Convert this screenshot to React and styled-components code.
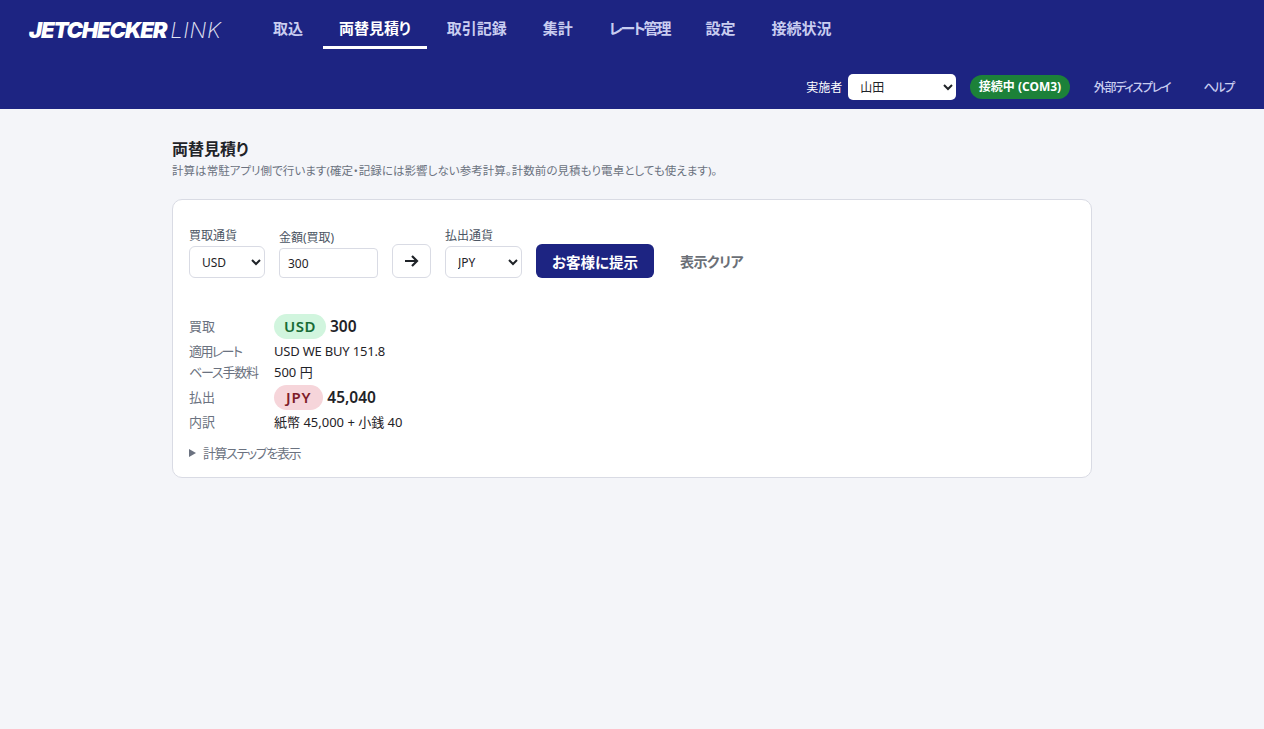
import React from 'react';
import styled, { createGlobalStyle } from 'styled-components';

const FONT = `"Noto Sans", "Noto Sans CJK JP", sans-serif`;

const GlobalStyle = createGlobalStyle`
    html, body {
        margin: 0;
        padding: 0;
        background: #f4f5f9;
    }
    body {
        font-family: ${FONT};
        font-feature-settings: "palt";
        color: #1f2328;
        min-height: 729px;
    }
    select, input, button {
        font-feature-settings: "palt";
    }
`;

const NAV_ITEMS = [
    { label: '取込' },
    { label: '両替見積り', active: true },
    { label: '取引記録' },
    { label: '集計' },
    { label: 'レート管理', track: -2.1 },
    { label: '設定' },
    { label: '接続状況' },
];

const Header = styled.header`
    background: #1d2482;
    height: 109px;
    display: flex;
    flex-direction: column;
    justify-content: space-between;
    padding: 0 30px 9px 29px;
    box-sizing: border-box;
`;

const TopRow = styled.div`
    display: flex;
    align-items: flex-start;
`;

const Logo = styled.div`
    width: 228px;
    height: 49px;
    padding-top: 10px;
    box-sizing: border-box;
    display: flex;
    align-items: center;
    gap: 4px;
    font-family: "Inter", sans-serif;
    font-style: italic;
    font-size: 22px;
    line-height: 1;
    color: #fff;
`;

const LogoBold = styled.span`
    font-weight: 900;
    letter-spacing: -1.2px;
`;

const LogoThin = styled.span`
    font-weight: 200;
    letter-spacing: 0.6px;
    color: #e4e6f4;
`;

const Nav = styled.nav`
    display: flex;
    gap: 4px;
`;

const Tab = styled.a`
    height: 49px;
    box-sizing: border-box;
    padding: 8px 16px 0;
    display: flex;
    align-items: center;
    font-size: 15px;
    font-weight: 700;
    letter-spacing: ${(p) => p.$track || 0}px;
    color: ${(p) => (p.$active ? '#fff' : '#c9cdf0')};
    border-bottom: 3px solid ${(p) => (p.$active ? '#fff' : 'transparent')};
`;

const ToolRow = styled.div`
    display: flex;
    justify-content: flex-end;
    align-items: center;
    height: 26px;
`;

const OperatorLabel = styled.label`
    display: flex;
    align-items: center;
    gap: 6px;
    color: #fff;
    font-size: 12px;
    margin-right: 14px;
`;

const OperatorSelect = styled.select`
    width: 108px;
    height: 26px;
    border: 0;
    border-radius: 5px;
    background: #fff;
    color: #1f2328;
    font-family: ${FONT};
    font-size: 12px;
    padding: 0 8px;
`;

const Status = styled.span`
    background: #1c8139;
    color: #fff;
    font-size: 12px;
    font-weight: 700;
    height: 24px;
    line-height: 24px;
    padding: 0 8.5px;
    border-radius: 12px;
    margin-right: 24px;
`;

const HeadLink = styled.a`
    color: #c9cdf0;
    font-size: 12px;
    font-weight: 500;
    letter-spacing: -1.25px;
    margin-left: ${(p) => (p.$gap ? '33px' : '0')};
`;

const Main = styled.main`
    width: 920px;
    margin: 0 auto;
    padding-top: 28px;
`;

const Title = styled.h1`
    margin: 0;
    font-size: 16px;
    line-height: 24px;
    font-weight: 700;
    color: #1f2328;
`;

const Sub = styled.p`
    margin: 2px 0 20px;
    font-size: 11.5px;
    letter-spacing: 0.05px;
    line-height: 16px;
    color: #6b7280;
`;

const Card = styled.section`
    box-sizing: border-box;
    height: 279px;
    background: #fff;
    border: 1px solid #d9dbe4;
    border-radius: 10px;
    padding: 26px 16px 0;
`;

const FormRow = styled.div`
    display: flex;
    align-items: flex-end;
    gap: 14px;
    height: 52px;
`;

const Field = styled.label`
    display: flex;
    flex-direction: column;
    gap: 2px;
    font-size: 12px;
    line-height: 16px;
    color: #4b5563;
`;

const Select = styled.select`
    width: ${(p) => p.$w || 76}px;
    height: 32px;
    box-sizing: border-box;
    border: 1px solid #d9dbe4;
    border-radius: 6px;
    background: #fff;
    color: #1f2328;
    font-family: ${FONT};
    font-size: 12px;
    padding: 0 8px;
`;

const Input = styled.input`
    width: 99px;
    height: 30px;
    box-sizing: border-box;
    border: 1px solid #d9dbe4;
    border-radius: 4px;
    background: #fff;
    color: #1f2328;
    font-family: ${FONT};
    font-size: 12px;
    padding: 0 8px;
`;

const ArrowButton = styled.button`
    width: 39px;
    height: 34px;
    box-sizing: border-box;
    border: 1px solid #d9dbe4;
    border-radius: 6px;
    background: #fff;
    color: #1f2328;
    display: flex;
    align-items: center;
    justify-content: center;
    padding: 0;
`;

const PrimaryButton = styled.button`
    height: 34px;
    width: 118px;
    border: 0;
    border-radius: 6px;
    background: #1d2482;
    color: #fff;
    font-family: ${FONT};
    font-size: 14.5px;
    font-weight: 700;
    padding: 0;
`;

const GhostButton = styled.button`
    height: 34px;
    border: 0;
    background: transparent;
    color: #6b6f76;
    font-family: ${FONT};
    font-size: 14px;
    font-weight: 700;
    letter-spacing: -0.5px;
    padding: 0 12px;
`;

const Rows = styled.div`
    margin-top: 36px;
    display: grid;
    grid-template-columns: 85px 1fr;
    row-gap: 4px;
    align-items: center;
`;

const RowLabel = styled.div`
    font-size: 13px;
    line-height: 17px;
    letter-spacing: ${(p) => p.$track || 0}px;
    color: #6b7280;
`;

const RowValue = styled.div`
    display: flex;
    align-items: center;
    gap: 4px;
    font-size: 13px;
    line-height: 17px;
    letter-spacing: ${(p) => p.$track || 0}px;
    color: #1f2328;
`;

const Pill = styled.span`
    height: 25px;
    line-height: 25px;
    padding: 0 ${(p) => (p.$tone === 'green' ? 10 : 12)}px;
    border-radius: 13px;
    font-size: 15px;
    font-weight: 600;
    letter-spacing: ${(p) => (p.$tone === 'green' ? 0.5 : 0.8)}px;
    background: ${(p) => (p.$tone === 'green' ? '#d1f5de' : '#f6d5da')};
    color: ${(p) => (p.$tone === 'green' ? '#176b35' : '#7f1d2a')};
`;

const Amount = styled.strong`
    font-size: 15.5px;
    font-weight: 600;
`;

const Steps = styled.div`
    margin-top: 13px;
    display: flex;
    align-items: center;
    gap: 7px;
    font-size: 13px;
    line-height: 18px;
    letter-spacing: -1.4px;
    color: #6b7280;
`;

const Caret = styled.span`
    width: 0;
    height: 0;
    border-left: 7px solid #6b7280;
    border-top: 4px solid transparent;
    border-bottom: 4px solid transparent;
`;

const Arrow = () => (
    <svg width="15" height="14" viewBox="0 0 15 14" fill="none" stroke="currentColor" strokeWidth="2.2">
        <path d="M1 7h12M8 2l5 5-5 5" />
    </svg>
);

const App = () => (
    <>
        <GlobalStyle />
        <Header>
            <TopRow>
                <Logo>
                    <LogoBold>JETCHECKER</LogoBold>
                    <LogoThin>LINK</LogoThin>
                </Logo>
                <Nav>
                    {NAV_ITEMS.map((item) => (
                        <Tab key={item.label} $active={item.active} $track={item.track}>{item.label}</Tab>
                    ))}
                </Nav>
            </TopRow>
            <ToolRow>
                <OperatorLabel>
                    実施者
                    <OperatorSelect defaultValue="山田">
                        <option>山田</option>
                    </OperatorSelect>
                </OperatorLabel>
                <Status>接続中 (COM3)</Status>
                <HeadLink>外部ディスプレイ</HeadLink>
                <HeadLink $gap>ヘルプ</HeadLink>
            </ToolRow>
        </Header>
        <Main>
            <Title>両替見積り</Title>
            <Sub>計算は常駐アプリ側で行います(確定・記録には影響しない参考計算。計数前の見積もり電卓としても使えます)。</Sub>
            <Card>
                <FormRow>
                    <Field>
                        買取通貨
                        <Select defaultValue="USD"><option>USD</option></Select>
                    </Field>
                    <Field>
                        金額(買取)
                        <Input defaultValue="300" />
                    </Field>
                    <ArrowButton aria-label="swap"><Arrow /></ArrowButton>
                    <Field>
                        払出通貨
                        <Select $w={77} defaultValue="JPY"><option>JPY</option></Select>
                    </Field>
                    <PrimaryButton>お客様に提示</PrimaryButton>
                    <GhostButton>表示クリア</GhostButton>
                </FormRow>
                <Rows>
                    <RowLabel>買取</RowLabel>
                    <RowValue><Pill $tone="green">USD</Pill><Amount>300</Amount></RowValue>
                    <RowLabel $track={-1.6}>適用レート</RowLabel>
                    <RowValue $track={-0.2}>USD WE BUY 151.8</RowValue>
                    <RowLabel $track={-1.2}>ベース手数料</RowLabel>
                    <RowValue>500 円</RowValue>
                    <RowLabel>払出</RowLabel>
                    <RowValue><Pill $tone="red">JPY</Pill><Amount>45,040</Amount></RowValue>
                    <RowLabel>内訳</RowLabel>
                    <RowValue>紙幣 45,000 + 小銭 40</RowValue>
                </Rows>
                <Steps><Caret />計算ステップを表示</Steps>
            </Card>
        </Main>
    </>
);

export default App;
